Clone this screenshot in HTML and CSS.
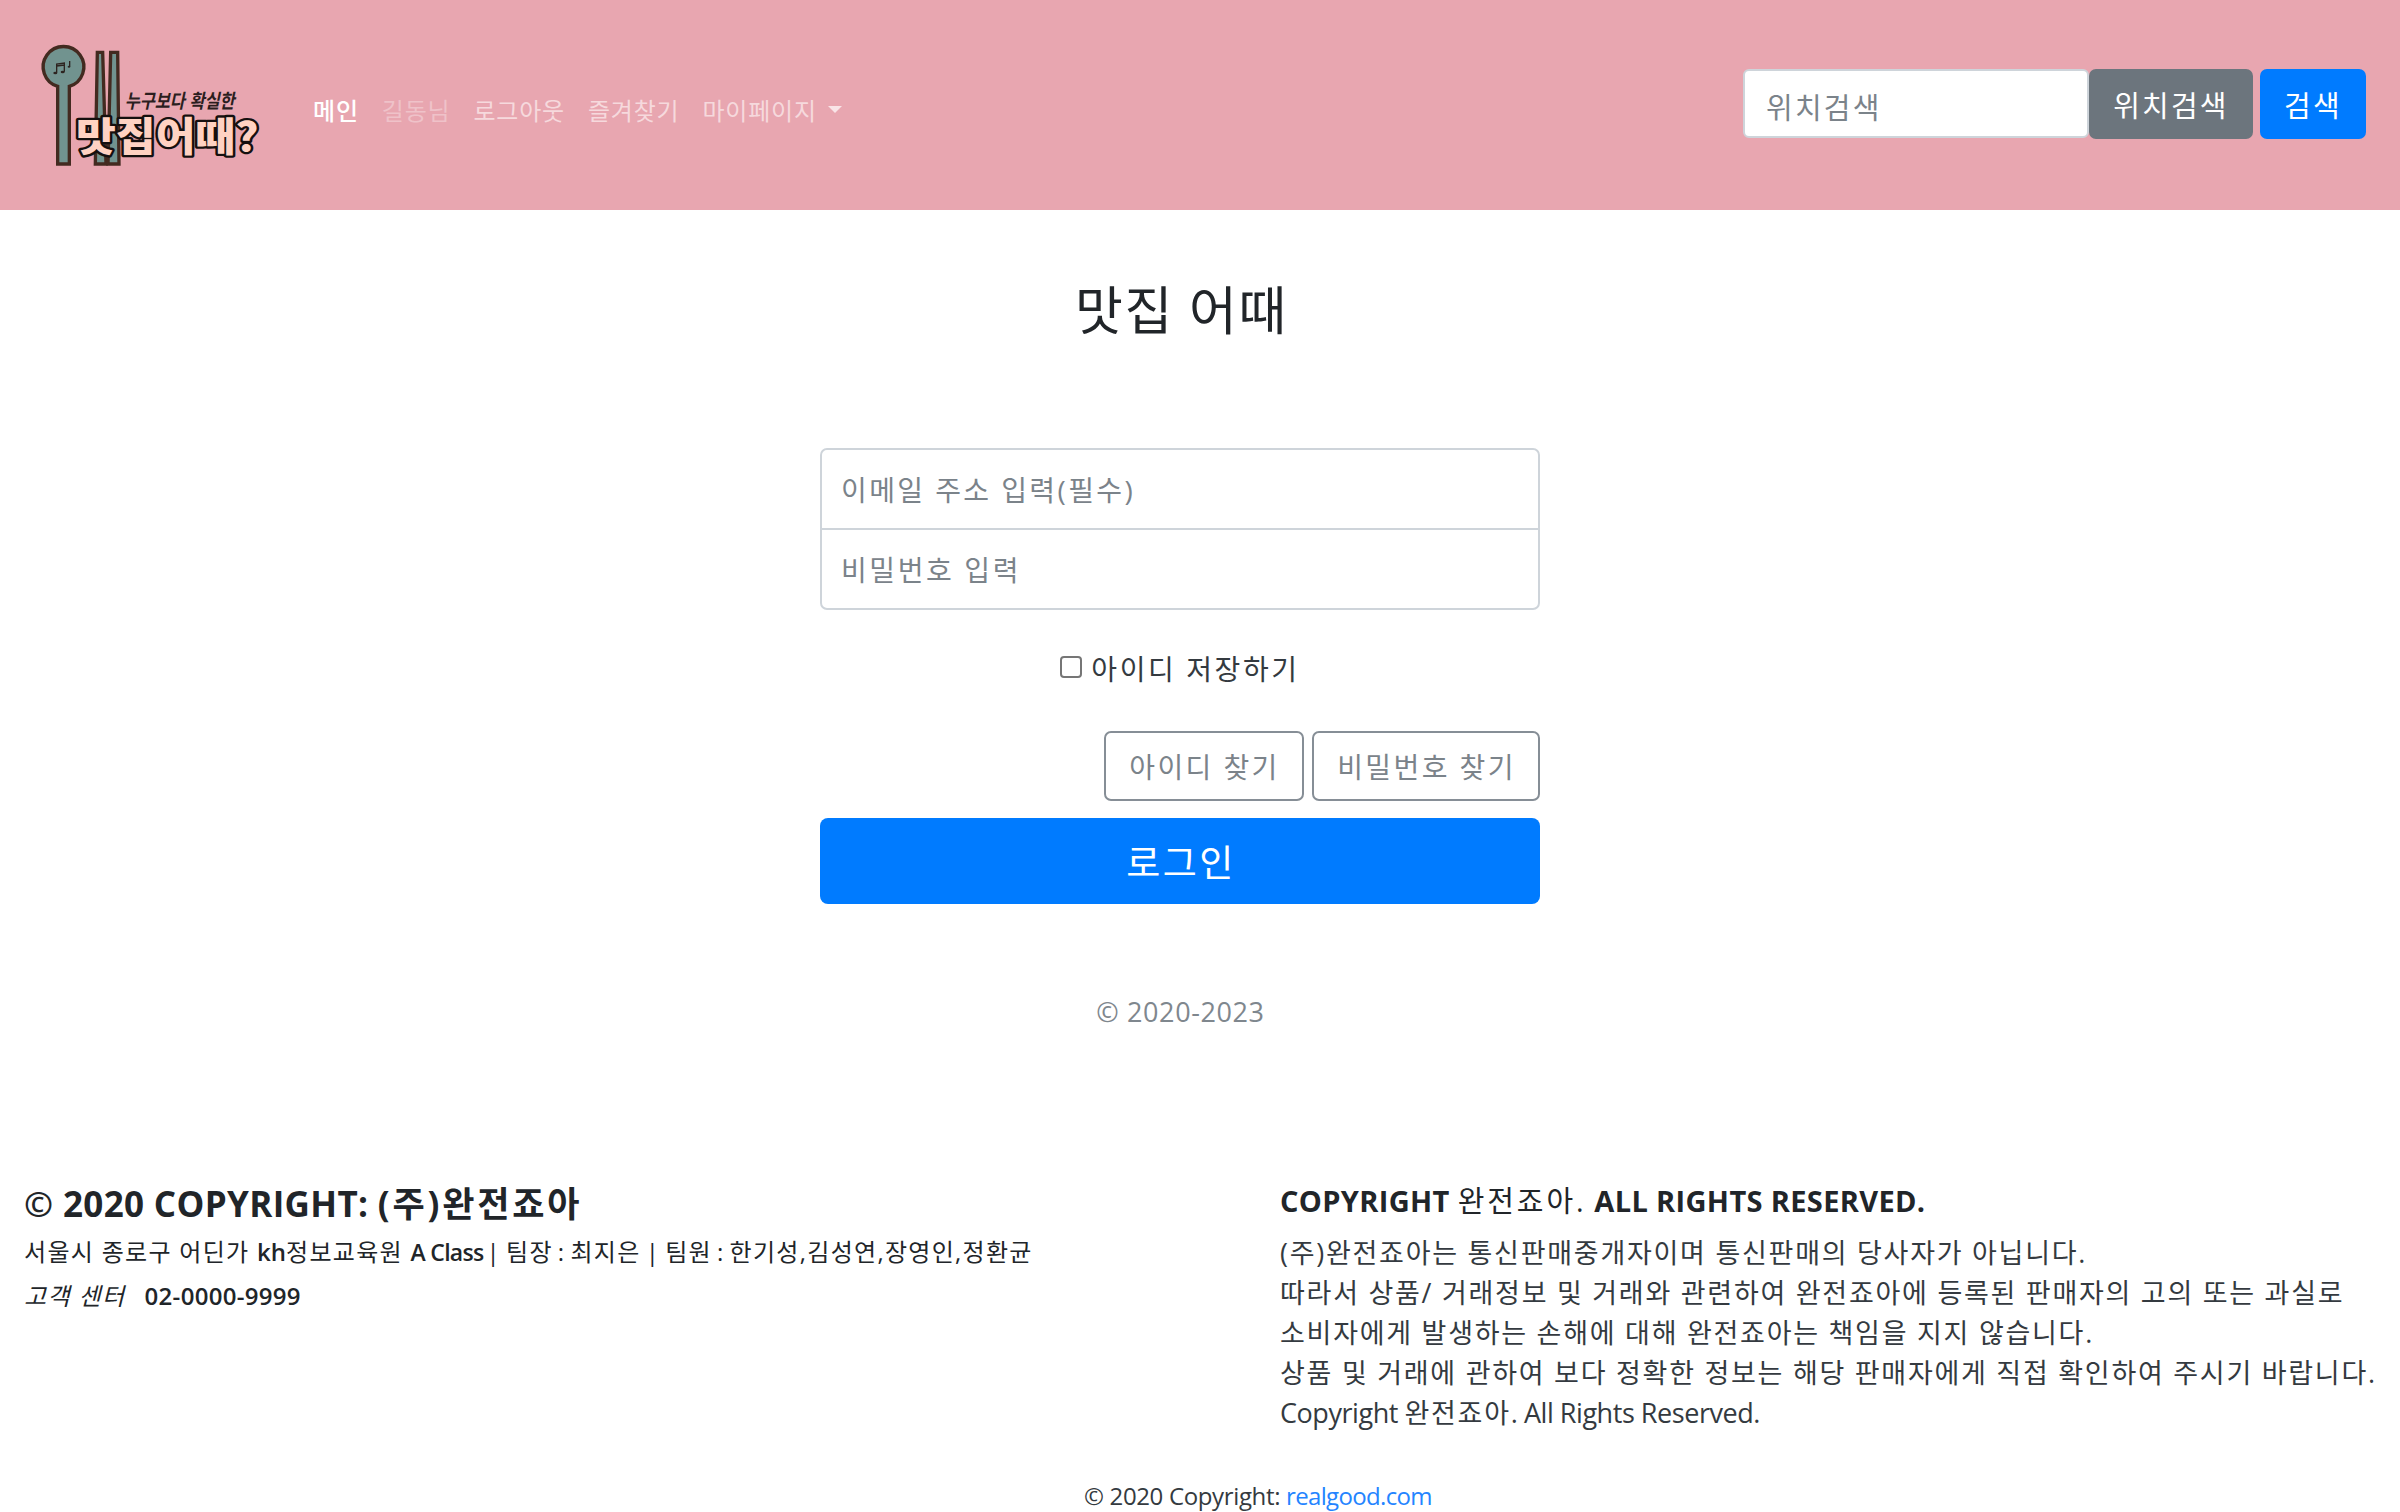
FILE: index.html
```html
<!DOCTYPE html>
<html lang="ko">
<head>
<meta charset="utf-8">
<title>맛집 어때</title>
<link rel="stylesheet" href="styles.css">
</head>
<body>
<header class="navbar">
  <svg class="logo" viewBox="0 0 720 420" role="img" aria-label="맛집어때?">
    <g fill="#71938f" stroke="#432a20" stroke-width="10">
      <path d="M83 154A61 61 0 1 1 118 154V387H83Z"/>
      <path d="M202 52H218L228 387H196Z"/>
      <path d="M242 52H263L267 387H234Z"/>
    </g>
    <g class="note" fill="none" stroke="#2d2420" stroke-width="4">
      <path d="M80 113V87L103 84V110M80 93L103 90M119 95V78"/>
      <g fill="#2d2420" stroke="none"><ellipse cx="76" cy="114" rx="6" ry="4"/><ellipse cx="98" cy="111" rx="6" ry="4"/><ellipse cx="117" cy="95" rx="4" ry="3"/></g>
    </g>
    <text class="logo-tagline" x="284" y="220" textLength="330" lengthAdjust="spacingAndGlyphs">누구보다 확실한</text>
    <text class="logo-name" x="138" y="348" textLength="548" lengthAdjust="spacingAndGlyphs">맛집어때?</text>
  </svg>
  <nav class="menu">
    <a class="menu-item active">메인</a>
    <a class="menu-item disabled">길동님</a>
    <a class="menu-item">로그아웃</a>
    <a class="menu-item">즐겨찾기</a>
    <a class="menu-item">마이페이지<span class="caret"></span></a>
  </nav>
  <div class="search">
    <input class="search-input" type="text" placeholder="위치검색">
    <button class="btn btn-secondary">위치검색</button>
    <button class="btn btn-primary">검색</button>
  </div>
</header>
<main class="signin">
  <h1 class="title">맛집 어때</h1>
  <input class="field field-top" type="email" placeholder="이메일 주소 입력(필수)">
  <input class="field field-bottom" type="password" placeholder="비밀번호 입력">
  <label class="remember"><input class="check" type="checkbox"><span>아이디 저장하기</span></label>
  <div class="find">
    <button class="btn-outline find-id">아이디 찾기</button>
    <button class="btn-outline find-pw">비밀번호 찾기</button>
  </div>
  <button class="login">로그인</button>
  <p class="years">© 2020-2023</p>
</main>
<footer class="footer">
  <div class="footer-columns">
    <section class="company">
      <h2 class="company-name"><span class="mark">©</span> 2020 COPYRIGHT: <span class="ko">(주)완전죠아</span></h2>
      <p class="address">서울시 종로구 어딘가 <b class="kh">kh</b>정보교육원 <b class="class-name">A Class</b><span class="team"> | 팀장 : 최지은 | 팀원 : 한기성,김성연,장영인,정환균</span></p>
      <p class="contact"><em>고객 센터</em><b>02-0000-9999</b></p>
    </section>
    <section class="legal">
      <h3 class="legal-title">COPYRIGHT <span class="ko">완전죠아.</span> ALL RIGHTS RESERVED.</h3>
      <p class="legal-text">(주)완전죠아는 통신판매중개자이며 통신판매의 당사자가 아닙니다.<br>따라서 상품/ 거래정보 및 거래와 관련하여 완전죠아에 등록된 판매자의 고의 또는 과실로<br>소비자에게 발생하는 손해에 대해 완전죠아는 책임을 지지 않습니다.<br>상품 및 거래에 관하여 보다 정확한 정보는 해당 판매자에게 직접 확인하여 주시기 바랍니다.<br><span class="latin">Copyright <span class="ko">완전죠아</span>. All Rights Reserved.</span></p>
    </section>
  </div>
  <p class="bottom">© 2020 Copyright: <a class="link">realgood.com</a></p>
</footer>
</body>
</html>
```
FILE: styles.css
```css
* { box-sizing: border-box; }
body {
  margin: 0;
  height: 1512px;
  overflow: hidden;
  background: #fff;
  color: #212529;
  font-family: "Open Sans", "Noto Sans CJK KR", sans-serif;
}
h1, h2, h3, p { margin: 0; white-space: nowrap; }
input, button { font-family: inherit; letter-spacing: inherit; }
input::placeholder { color: #7b838a; opacity: 1; }

.navbar {
  display: flex;
  align-items: center;
  height: 210px;
  padding: 0 34px 0 30px;
  background: #e8a6b0;
}
.logo { width: 240px; height: 140px; }
.logo-name {
  font: 900 118px "Noto Sans CJK KR", sans-serif;
  fill: #ffd2c2;
  stroke: #15100f;
  stroke-width: 14px;
  stroke-linejoin: round;
  paint-order: stroke;
}
.logo-tagline { font: italic 700 58px "Noto Sans CJK KR", sans-serif; fill: #2b1e1e; }
.menu {
  display: flex;
  gap: 23px;
  margin: 12px 0 0 43px;
  font-size: 24px;
  line-height: 36px;
  letter-spacing: 0.8px;
}
.menu-item { display: flex; align-items: center; color: #f6d9dd; }
.menu-item.active { color: #fff; font-weight: 500; }
.menu-item.disabled { color: #efc2c9; }
.caret {
  margin: -3px 0 0 11px;
  border: 7px solid transparent;
  border-top-color: #f9e4e7;
  border-bottom: 0;
}
.search {
  display: flex;
  align-items: center;
  margin: -3px 0 0 auto;
  font-size: 29px;
  letter-spacing: 2.2px;
}
.search-input {
  width: 346px;
  height: 69px;
  padding: 8px 21px 0;
  border: 2px solid #ced4da;
  border-radius: 6px;
  font-size: 29px;
}
.btn {
  height: 70px;
  padding: 1px 0 0;
  border: 0;
  border-radius: 7px;
  color: #fff;
  font-size: 29px;
}
.btn-secondary { width: 164px; background: #6c757d; }
.btn-primary { width: 106px; margin-left: 7px; background: #007bff; }

.signin {
  display: flex;
  flex-direction: column;
  width: 720px;
  margin: 70px 0 0 820px;
  font-size: 28px;
  letter-spacing: 2.4px;
}
.title {
  padding-left: 3px;
  font-size: 52px;
  line-height: 60px;
  font-weight: 400;
  letter-spacing: 1.6px;
  text-align: center;
}
.field {
  height: 82px;
  padding: 2px 19px 0;
  border: 2px solid #ced4da;
  font-size: 28px;
}
.field-top { margin-top: 108px; border-radius: 7px 7px 0 0; }
.field-bottom { margin-top: -2px; border-radius: 0 0 7px 7px; letter-spacing: 2.6px; }
.remember {
  display: flex;
  align-items: center;
  justify-content: center;
  gap: 9px;
  height: 40px;
  margin-top: 38px;
  letter-spacing: 2.6px;
  color: #343a40;
}
.check {
  width: 22px;
  height: 22px;
  margin: -2px 0 0;
  appearance: none;
  border: 2px solid #767676;
  border-radius: 4px;
}
.find { display: flex; justify-content: flex-end; gap: 8px; margin-top: 43px; }
.btn-outline {
  height: 70px;
  padding: 0 0 1px 1px;
  border: 2px solid #868e96;
  border-radius: 7px;
  background: #fff;
  color: #7b838a;
  font-size: 28px;
}
.find-id { width: 200px; }
.find-pw { width: 228px; }
.login {
  height: 86px;
  margin-top: 17px;
  padding: 0 0 0 2px;
  border: 0;
  border-radius: 8px;
  background: #007bff;
  color: #fff;
  font-size: 37px;
}
.years {
  margin-top: 88px;
  padding-left: 1px;
  line-height: 40px;
  font-size: 27px;
  letter-spacing: 0.6px;
  color: #7f878e;
  text-align: center;
}

.footer { margin-top: 149px; }
.footer-columns { display: flex; }
.company { width: 1256px; margin-left: 24px; }
.company-name {
  padding-top: 1px;
  font-size: 35px;
  line-height: 44px;
  letter-spacing: 0.35px;
}
.company-name .mark { font-weight: 600; }
.company-name .ko { letter-spacing: 2.8px; }
.address {
  margin-top: 6px;
  font-size: 24px;
  line-height: 40px;
  letter-spacing: 1.3px;
}
.address b { font-weight: 600; letter-spacing: 0; }
.address .class-name { margin-right: -2px; font-size: 23px; letter-spacing: -0.7px; }
.address .team { word-spacing: -2.5px; }
.contact { margin-top: 4px; font-size: 24px; line-height: 40px; }
.contact em { margin-right: 19px; letter-spacing: 1.4px; }
.contact b { font-weight: 600; letter-spacing: 0.3px; }
.legal-title {
  font-size: 29px;
  line-height: 40px;
  letter-spacing: 0.35px;
}
.legal-title .ko { font-weight: 400; letter-spacing: 2.9px; }
.legal-text {
  margin-top: 12px;
  font-size: 27px;
  line-height: 40px;
  letter-spacing: 1.73px;
  color: #343a40;
}
.legal-text .latin { letter-spacing: -0.45px; }
.legal-text .latin .ko { letter-spacing: 1.7px; }
.bottom {
  margin: 43px 0 0 1084px;
  font-size: 24px;
  line-height: 40px;
  letter-spacing: -0.35px;
  color: #343a40;
}
.link { color: #2484ff; letter-spacing: -0.65px; }
```
